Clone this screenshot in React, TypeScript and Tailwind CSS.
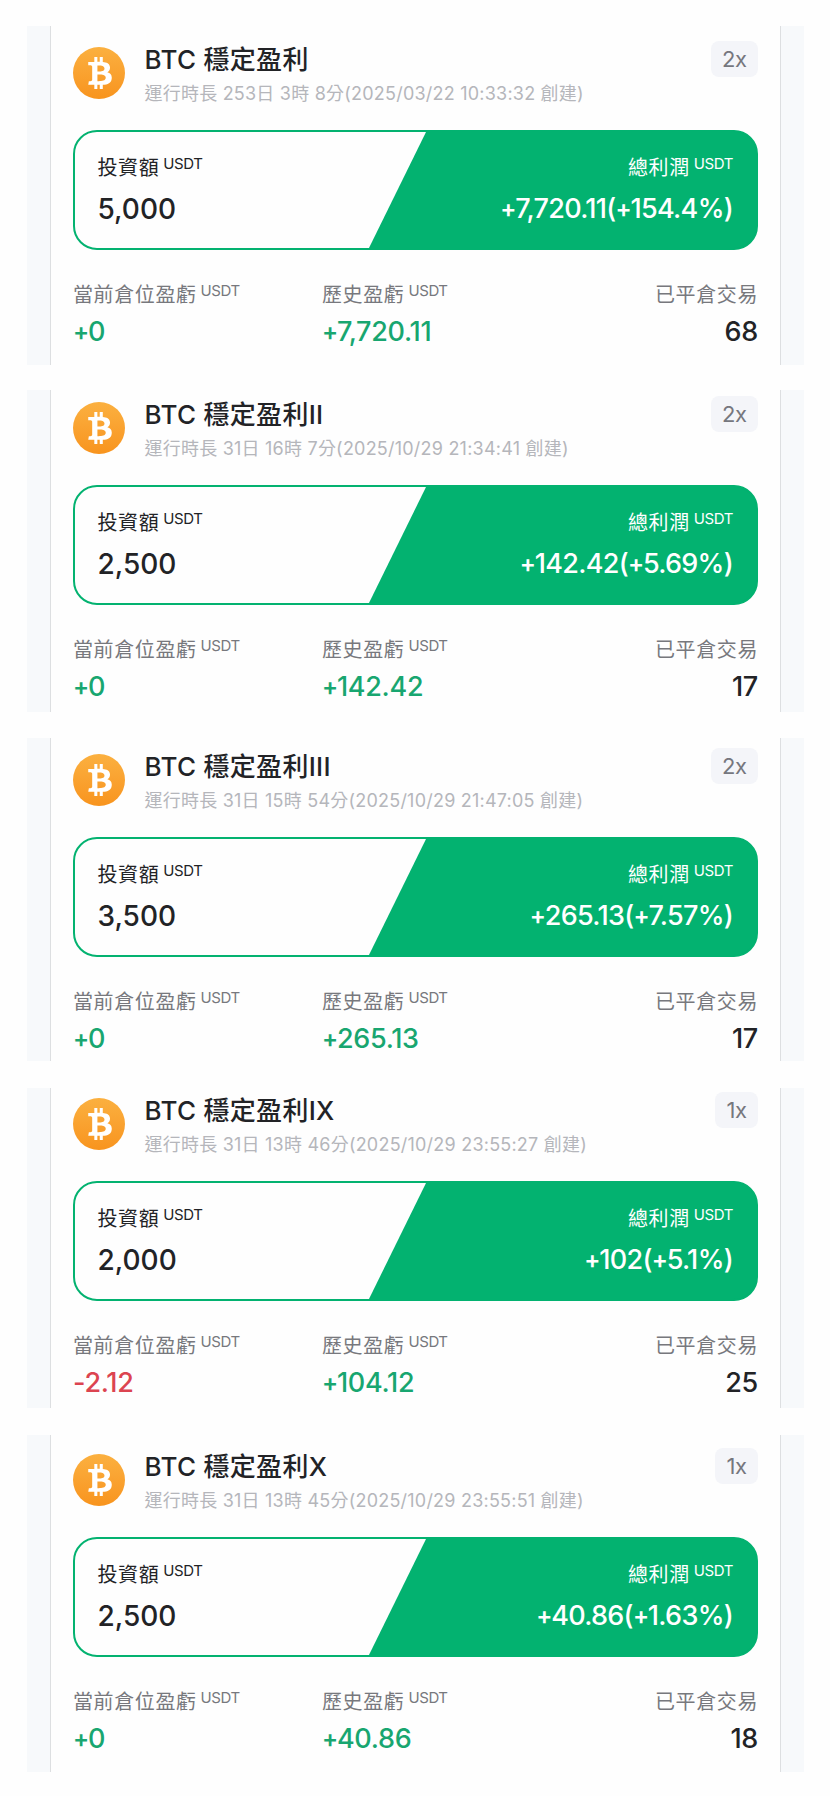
import clsx from 'clsx'
import React from 'react'
import {FaBtc} from 'react-icons/fa'

type Bot = {
  name: string
  runtime: string
  leverage: string
  invested: string
  profit: string
  current: string
  history: string
  trades: string
  frame: string
}

const bots: Bot[] = [
  {
    name: 'BTC 穩定盈利',
    runtime: '運行時長 253日 3時 8分(2025/03/22 10:33:32 創建)',
    leverage: '2x',
    invested: '5,000',
    profit: '+7,720.11(+154.4%)',
    current: '+0',
    history: '+7,720.11',
    trades: '68',
    frame: 'mt-[26px] h-[339px] *:pt-[21px]',
  },
  {
    name: 'BTC 穩定盈利II',
    runtime: '運行時長 31日 16時 7分(2025/10/29 21:34:41 創建)',
    leverage: '2x',
    invested: '2,500',
    profit: '+142.42(+5.69%)',
    current: '+0',
    history: '+142.42',
    trades: '17',
    frame: 'mt-[25px] h-[322px] *:pt-[12px]',
  },
  {
    name: 'BTC 穩定盈利III',
    runtime: '運行時長 31日 15時 54分(2025/10/29 21:47:05 創建)',
    leverage: '2x',
    invested: '3,500',
    profit: '+265.13(+7.57%)',
    current: '+0',
    history: '+265.13',
    trades: '17',
    frame: 'mt-[26px] h-[323px] *:pt-[16px]',
  },
  {
    name: 'BTC 穩定盈利IX',
    runtime: '運行時長 31日 13時 46分(2025/10/29 23:55:27 創建)',
    leverage: '1x',
    invested: '2,000',
    profit: '+102(+5.1%)',
    current: '-2.12',
    history: '+104.12',
    trades: '25',
    frame: 'mt-[27px] h-[320px] *:pt-[10px]',
  },
  {
    name: 'BTC 穩定盈利X',
    runtime: '運行時長 31日 13時 45分(2025/10/29 23:55:51 創建)',
    leverage: '1x',
    invested: '2,500',
    profit: '+40.86(+1.63%)',
    current: '+0',
    history: '+40.86',
    trades: '18',
    frame: 'mt-[27px] h-[337px] *:pt-[19px]',
  },
]

function Label({text, unit}: {text: string; unit?: boolean}) {
  return (
    <div className="flex h-7 items-start gap-1 whitespace-nowrap text-xl leading-[30px] tracking-[0.6px]">
      <span>{text}</span>
      {unit && (
        <span className="text-[15px] leading-[22px] tracking-[-0.4px]">
          USDT
        </span>
      )}
    </div>
  )
}

// plus signs are set smaller than the digits
function Value({text, className}: {text: string; className: string}) {
  return (
    <p className={clsx('h-8 whitespace-nowrap font-medium leading-8', className)}>
      {text.split(/(\+)/).map((part, i) =>
        part === '+' ? (
          <span
            key={i}
            className="align-[1px] text-[24px] font-semibold leading-none tracking-[-1.2px]"
          >
            +
          </span>
        ) : (
          part
        ),
      )}
    </p>
  )
}

function BotCard({bot}: {bot: Bot}) {
  const stat = 'mt-2 text-[27px] tracking-[-0.3px]'

  return (
    <article
      className={clsx(
        'ml-[27px] w-[777px] border-x-[23px] border-[#f7f9fb]',
        bot.frame,
      )}
    >
      <div className="h-full border-x border-[#dddfe1] px-[22px]">
        <header className="flex h-[52px]">
          <div className="flex size-[52px] shrink-0 items-center justify-center rounded-full bg-linear-to-b from-[#fbb03f] to-[#f8941d]">
            <FaBtc className="ml-0.5 h-[32px] w-[24px] text-white" />
          </div>
          <div className="ml-[19.5px] flex-1 whitespace-nowrap">
            <h2 className="-mt-[3px] text-[26px] font-medium leading-8 tracking-[0.3px] text-[#222326]">
              {bot.name}
            </h2>
            <p className="mt-1 text-lg leading-7 tracking-[0.22px] text-[#b5b6bb]">
              {bot.runtime}
            </p>
          </div>
          <span className="-mt-1.5 h-9 rounded-lg bg-[#f4f5f9] px-[11.5px] text-[22px] leading-9 tracking-[-0.5px] text-[#76777e]">
            {bot.leverage}
          </span>
        </header>
        <section className="mt-[31px] flex h-[120px] justify-between overflow-hidden rounded-3xl border-2 border-[#03b270] bg-[linear-gradient(to_right,transparent_60%,#03b270_60%)] bg-origin-border">
          <div className="pl-[22.5px] pt-[21px] text-[#222326]">
            <Label text="投資額" unit />
            <Value text={bot.invested} className="mt-3 text-[28px]" />
          </div>
          <div className="-m-0.5 flex w-[390px] flex-col items-end bg-[#03b270] pr-[25px] pt-[23px] text-white [clip-path:polygon(59px_0,100%_0,100%_100%,0_100%)]">
            <Label text="總利潤" unit />
            <Value
              text={bot.profit}
              className="mt-3 text-[27px] tracking-[-0.7px]"
            />
          </div>
        </section>
        <footer className="flex pt-[30px] text-[#77787d]">
          <div className="w-[249px]">
            <Label text="當前倉位盈虧" unit />
            <Value
              text={bot.current}
              className={clsx(
                stat,
                bot.current.startsWith('-')
                  ? 'text-[#dc4450]'
                  : 'text-[#18a670]',
              )}
            />
          </div>
          <div className="flex-1">
            <Label text="歷史盈虧" unit />
            <Value
              text={bot.history}
              className={clsx(stat, 'text-[#18a670]')}
            />
          </div>
          <div className="flex flex-col items-end">
            <Label text="已平倉交易" />
            <Value text={bot.trades} className={clsx(stat, 'text-[#222326]')} />
          </div>
        </footer>
      </div>
    </article>
  )
}

export default function App() {
  return (
    <main className="flex h-[1796px] w-[830px] flex-col bg-[#fefefe] font-[Inter,'Noto_Sans_CJK_TC',sans-serif]">
      {bots.map(bot => (
        <BotCard key={bot.name} bot={bot} />
      ))}
    </main>
  )
}
